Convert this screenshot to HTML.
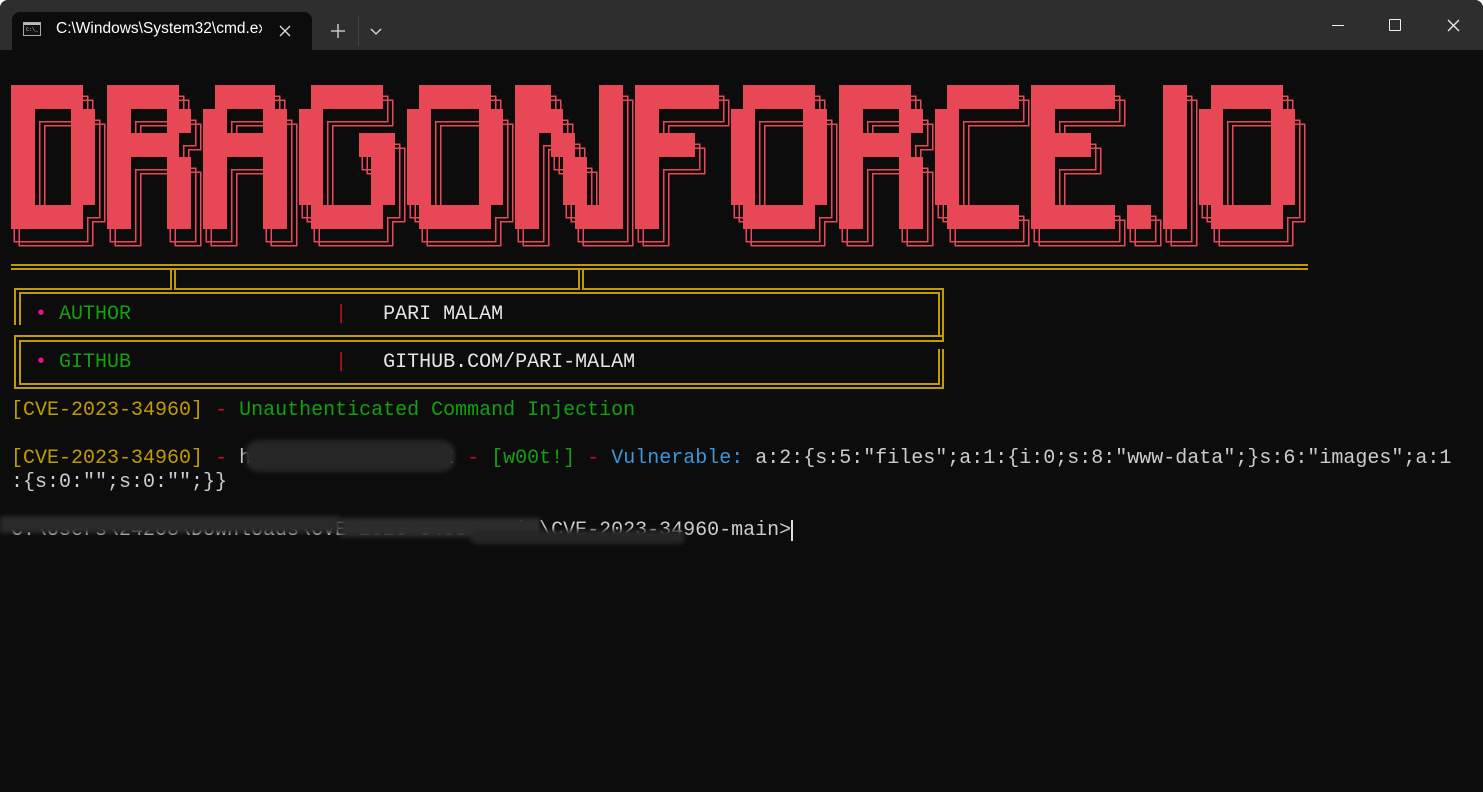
<!DOCTYPE html>
<html><head><meta charset="utf-8"><style>
*{margin:0;padding:0;box-sizing:border-box}
body{width:1483px;height:792px;background:#ffffff;overflow:hidden;position:relative;font-family:"Liberation Mono",monospace}
#win{position:absolute;left:0;top:0;width:1483px;height:792px;background:#0c0c0c;border-radius:8px 8px 0 0;overflow:hidden}
#bar{position:absolute;left:0;top:0;width:1483px;height:50px;background:#2e2e2e}
#tab{position:absolute;left:12px;top:12px;width:300px;height:40px;background:#0c0c0c;border-radius:8px 8px 0 0}
.t{position:absolute;left:11px;height:24px;line-height:24px;font-size:20px;white-space:pre;color:#cccccc;margin-top:2px}
.y{color:#c19c00}.g{color:#13a10e}.r{color:#c50f1f}.b{color:#3a96dd}.p{color:#e3138f}.w{color:#e6e6e6}
.yl{position:absolute;background:#c19c00}
.bl{position:absolute;background:#2a2a2a;filter:blur(2px)}
</style></head><body>
<div id="win">
<div id="bar"></div>
<div id="tab">
 <svg style="position:absolute;left:11px;top:10px" width="20" height="16"><rect x="0.5" y="0.5" width="17" height="13" fill="#111" stroke="#aaa"/><rect x="1" y="1" width="16" height="2" fill="#bbb"/><text x="3" y="9" font-size="5" fill="#ddd" font-family="Liberation Mono">C:\_</text></svg>
 <div style="position:absolute;left:44px;top:8px;font-family:'Liberation Sans',sans-serif;font-size:15.5px;color:#fff;width:206px;overflow:hidden;white-space:nowrap">C:\Windows\System32\cmd.exe</div>
 <svg style="position:absolute;left:267px;top:13px" width="12" height="12"><path d="M1 1L11 11M11 1L1 11" stroke="#ddd" stroke-width="1.3"/></svg>
</div>
<svg style="position:absolute;left:331px;top:24px" width="14" height="14"><path d="M7 0V14M0 7H14" stroke="#ddd" stroke-width="1.3"/></svg>
<div style="position:absolute;left:358px;top:16px;width:1px;height:30px;background:#444"></div>
<svg style="position:absolute;left:370px;top:28px" width="12" height="8"><path d="M1 1L6 6L11 1" stroke="#ddd" stroke-width="1.3" fill="none"/></svg>
<div style="position:absolute;left:1332px;top:25px;width:12px;height:1px;background:#eee"></div>
<div style="position:absolute;left:1389px;top:19px;width:12px;height:12px;border:1.3px solid #eee;border-radius:1px"></div>
<svg style="position:absolute;left:1447px;top:19px" width="13" height="13"><path d="M1 1L12 12M12 1L1 12" stroke="#eee" stroke-width="1.3"/></svg>

<svg style="position:absolute;left:0;top:0" width="1483" height="792">
<defs>
<filter id="ol" filterUnits="userSpaceOnUse" x="0" y="0" width="1483" height="400">
<feMorphology in="SourceAlpha" operator="dilate" radius="1.6" result="d"/>
<feComposite in="d" in2="SourceAlpha" operator="out" result="o"/>
<feFlood flood-color="#e84855"/>
<feComposite in2="o" operator="in"/>
</filter>
<g id="L" transform="translate(11 85) scale(12 24)" fill="#e84855">
<rect x="0" y="0" width="6" height="1"/><rect x="0" y="0" width="2" height="6"/><rect x="5" y="1" width="2" height="4"/><rect x="0" y="5" width="6" height="1"/>
<rect x="8" y="0" width="6" height="1"/><rect x="8" y="0" width="2" height="6"/><rect x="13" y="1" width="2" height="1"/><rect x="8" y="2" width="6" height="1"/><rect x="13" y="3" width="2" height="3"/>
<rect x="17" y="0" width="5" height="1"/><rect x="16" y="1" width="2" height="5"/><rect x="21" y="1" width="2" height="5"/><rect x="16" y="2" width="7" height="1"/>
<rect x="25" y="0" width="6" height="1"/><rect x="24" y="1" width="2" height="4"/><rect x="29" y="2" width="3" height="1"/><rect x="30" y="3" width="2" height="2"/><rect x="25" y="5" width="6" height="1"/>
<rect x="34" y="0" width="6" height="1"/><rect x="33" y="1" width="2" height="4"/><rect x="39" y="1" width="2" height="4"/><rect x="34" y="5" width="6" height="1"/>
<rect x="42" y="0" width="3" height="1"/><rect x="42" y="1" width="4" height="1"/><rect x="42" y="0" width="2" height="6"/><rect x="45" y="2" width="2" height="1"/><rect x="46" y="3" width="2" height="2"/><rect x="47" y="5" width="4" height="1"/><rect x="49" y="0" width="2" height="6"/>
<rect x="52" y="0" width="7" height="1"/><rect x="52" y="0" width="2" height="6"/><rect x="54" y="2" width="3" height="1"/>
<rect x="61" y="0" width="6" height="1"/><rect x="60" y="1" width="2" height="4"/><rect x="66" y="1" width="2" height="4"/><rect x="61" y="5" width="6" height="1"/>
<rect x="69" y="0" width="6" height="1"/><rect x="69" y="0" width="2" height="6"/><rect x="74" y="1" width="2" height="1"/><rect x="69" y="2" width="6" height="1"/><rect x="74" y="3" width="2" height="3"/>
<rect x="78" y="0" width="6" height="1"/><rect x="77" y="1" width="2" height="4"/><rect x="78" y="5" width="6" height="1"/>
<rect x="85" y="0" width="7" height="1"/><rect x="85" y="0" width="2" height="6"/><rect x="85" y="2" width="5" height="1"/><rect x="85" y="5" width="7" height="1"/>
<rect x="93" y="5" width="2" height="1"/>
<rect x="96" y="0" width="2" height="6"/>
<rect x="100" y="0" width="6" height="1"/><rect x="99" y="1" width="2" height="4"/><rect x="105" y="1" width="2" height="4"/><rect x="100" y="5" width="6" height="1"/>
</g>
</defs>
<use href="#L" x="9" y="16" filter="url(#ol)"/>
<use href="#L" x="4" y="12" filter="url(#ol)"/>
<use href="#L"/>
</svg>

<div class="yl" style="left:11px;top:264px;width:1297px;height:2px"></div>
<div class="yl" style="left:11px;top:268px;width:1297px;height:2px"></div>
<div class="yl" style="left:170px;top:268px;width:2px;height:22px"></div>
<div class="yl" style="left:174px;top:268px;width:2px;height:22px"></div>
<div class="yl" style="left:578px;top:268px;width:2px;height:22px"></div>
<div class="yl" style="left:582px;top:268px;width:2px;height:22px"></div>
<div class="yl" style="left:14px;top:288px;width:158px;height:2px"></div>
<div class="yl" style="left:174px;top:288px;width:406px;height:2px"></div>
<div class="yl" style="left:582px;top:288px;width:362px;height:2px"></div>
<div class="yl" style="left:14px;top:288px;width:2px;height:37px"></div>
<div class="yl" style="left:19px;top:292px;width:2px;height:33px"></div>
<div class="yl" style="left:19px;top:292px;width:921px;height:2px"></div>
<div class="yl" style="left:942px;top:288px;width:2px;height:53px"></div>
<div class="yl" style="left:938px;top:292px;width:2px;height:45px"></div>
<div class="yl" style="left:14px;top:335px;width:930px;height:2px"></div>
<div class="yl" style="left:19px;top:340px;width:925px;height:2px"></div>
<div class="yl" style="left:14px;top:335px;width:2px;height:54px"></div>
<div class="yl" style="left:19px;top:340px;width:2px;height:45px"></div>
<div class="yl" style="left:942px;top:349px;width:2px;height:40px"></div>
<div class="yl" style="left:938px;top:349px;width:2px;height:36px"></div>
<div class="yl" style="left:19px;top:383px;width:921px;height:2px"></div>
<div class="yl" style="left:14px;top:387px;width:930px;height:2px"></div>

<div class="t" style="top:301px">  <span class="p">•</span> <span class="g">AUTHOR</span>                 <span class="r">|</span>   <span class="w">PARI MALAM</span></div>
<div class="t" style="top:349px">  <span class="p">•</span> <span class="g">GITHUB</span>                 <span class="r">|</span>   <span class="w">GITHUB.COM/PARI-MALAM</span></div>
<div class="t" style="top:397px"><span class="y">[CVE-2023-34960]</span> <span class="r">-</span> <span class="g">Unauthenticated Command Injection</span></div>
<div class="t" style="top:445px"><span class="y">[CVE-2023-34960]</span> <span class="r">-</span> h                t <span class="r">-</span> <span class="g">[w00t!]</span> <span class="r">-</span> <span class="b">Vulnerable:</span> a:2:{s:5:"files";a:1:{i:0;s:8:"www-data";}s:6:"images";a:1</div>
<div class="t" style="top:469px">:{s:0:"";s:0:"";}}</div>
<div class="t" style="top:517px">C:\Users\24208\Downloads\CVE-2023-34960-main\CVE-2023-34960-main&gt;</div>
<div style="position:absolute;left:791px;top:520px;width:2px;height:21px;background:#ddd"></div>

<div class="bl" style="left:245px;top:440px;width:210px;height:32px;border-radius:14px;background:#262626"></div>
<div class="bl" style="left:0px;top:516px;width:340px;height:17px;background:#2a2a2a"></div>
<div class="bl" style="left:340px;top:518px;width:200px;height:19px;background:#2d2d2d"></div>
<div class="bl" style="left:470px;top:530px;width:215px;height:14px;background:#262626;border-radius:8px"></div>
</div>
</body></html>
